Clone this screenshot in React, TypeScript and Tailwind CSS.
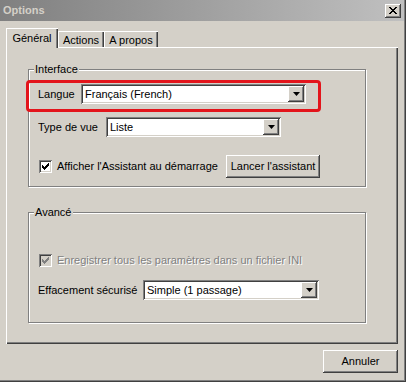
import React from "react";

const raised =
  "shadow-[inset_-1px_-1px_0_#404040,inset_1px_1px_0_#ffffff,inset_-2px_-2px_0_#808080,inset_2px_2px_0_#d4d0c8]";
const sunken =
  "shadow-[inset_1px_1px_0_#808080,inset_-1px_-1px_0_#ffffff,inset_2px_2px_0_#404040,inset_-2px_-2px_0_#d4d0c8]";
const etched = "border border-[#808080] shadow-[1px_1px_0_#ffffff,inset_1px_1px_0_#ffffff]";

function Select({ value, width }: { value: string; width: string }) {
  return (
    <div className={`flex h-[20px] items-center bg-white pl-[4px] pr-[2px] ${sunken} ${width}`}>
      <span className="flex-1 truncate">{value}</span>
      <span className={`flex h-[16px] w-[16px] items-center justify-center bg-[#d4d0c8] ${raised}`}>
        <svg width="7" height="4" viewBox="0 0 7 4">
          <path d="M0 0h7L3.5 4z" fill="#000" />
        </svg>
      </span>
    </div>
  );
}

function Check({ disabled }: { disabled?: boolean }) {
  return (
    <span
      className={`flex h-[13px] w-[13px] shrink-0 items-center justify-center ${
        disabled ? "bg-[#d4d0c8]" : "bg-white"
      } ${sunken}`}
    >
      <svg width="7" height="7" viewBox="0 0 7 7" shapeRendering="crispEdges">
        <path
          d="M0 2h1v1h1v1h1V3h1V2h1V1h1V0h1v3H6v1H5v1H4v1H3v1H2V6H1V5H0z"
          fill={disabled ? "#808080" : "#000"}
        />
      </svg>
    </span>
  );
}

function Button({ label, width }: { label: string; width: string }) {
  return (
    <div className={`flex h-[23px] items-center justify-center bg-[#d4d0c8] ${raised} ${width}`}>
      {label}
    </div>
  );
}

export default function App() {
  return (
    <div className="h-[382px] w-[408px] bg-white font-['Liberation_Sans',Arial,sans-serif] text-[11px] leading-none text-black">
      <div className="flex h-[382px] w-[406px] flex-col bg-[#d4d0c8] shadow-[inset_-1px_-1px_0_#404040,inset_-2px_-2px_0_#808080]">
        {/* title bar */}
        <div className="mr-[2px] flex h-[21px] items-center justify-between bg-gradient-to-r from-[#808080] to-[#c0c0c0] pl-[3px] pr-[3px]">
          <span className="font-bold text-[#d4d0c8]">Options</span>
          <span className={`flex h-[14px] w-[16px] items-center justify-center bg-[#d4d0c8] ${raised}`}>
            <svg width="8" height="7" viewBox="0 0 8 7" shapeRendering="crispEdges">
              <path
                d="M0 0h2v1h1v1h2V1h1V0h2v1H7v1H6v1H5v1h1v1h1v1h1v1H6V6H5V5H3v1H2v1H0V6h1V5h1V4h1V3H2V2H1V1H0z"
                fill="#000"
              />
            </svg>
          </span>
        </div>

        <div className="flex flex-col pl-[6px] pr-[8px]">
          {/* tabs */}
          <div className="mt-[8px] flex h-[18px] items-end">
            <div className="relative z-10 -mb-px flex h-[20px] w-[52px] items-start justify-center bg-[#d4d0c8] pt-[5px] shadow-[inset_1px_1px_0_#ffffff,inset_-1px_0_0_#404040,inset_-2px_0_0_#808080]">
              Général
            </div>
            <div className="flex h-[16px] w-[46px] items-start justify-center pt-[4px] shadow-[inset_1px_1px_0_#ffffff,inset_-1px_0_0_#404040,inset_-2px_0_0_#808080]">
              Actions
            </div>
            <div className="flex h-[16px] w-[54px] items-start justify-center pt-[4px] shadow-[inset_1px_1px_0_#ffffff,inset_-1px_0_0_#404040,inset_-2px_0_0_#808080]">
              A propos
            </div>
          </div>

          {/* panel */}
          <div className="flex h-[297px] flex-col pl-[22px] pt-[22px] shadow-[inset_1px_1px_0_#ffffff,inset_-1px_-1px_0_#404040,inset_-2px_-2px_0_#808080]">
            {/* Interface */}
            <div className={`relative flex h-[118px] w-[338px] flex-col ${etched}`}>
              <span className="absolute -top-[6px] left-[5px] bg-[#d4d0c8] px-px">Interface</span>
              <div className="-ml-[3px] mt-[10px] h-[32px] w-[295px] rounded-[4px] border-[3px] border-[#e3141b] pl-[9px] pt-px">
                <div className="flex h-[20px] items-center">
                  <span className="w-[43px]">Langue</span>
                  <Select value="Français (French)" width="w-[225px]" />
                </div>
              </div>
              <div className="ml-[9px] mt-[5px] flex h-[20px] items-center">
                <span className="w-[68px]">Type de vue</span>
                <Select value="Liste" width="w-[175px]" />
              </div>
              <div className="ml-[10px] mt-[18px] flex h-[23px] items-center">
                <Check />
                <span className="ml-[5px] w-[169px]">Afficher l'Assistant au démarrage</span>
                <Button label="Lancer l'assistant" width="w-[94px]" />
              </div>
            </div>

            {/* Avancé */}
            <div className={`relative mt-[25px] flex h-[111px] w-[338px] flex-col ${etched}`}>
              <span className="absolute -top-[6px] left-[5px] bg-[#d4d0c8] px-px">Avancé</span>
              <div className="ml-[10px] mt-[41px] flex h-[13px] items-center">
                <Check disabled />
                <span className="ml-[5px] text-[#808080] [text-shadow:1px_1px_0_#ffffff]">
                  Enregistrer tous les paramètres dans un fichier INI
                </span>
              </div>
              <div className="ml-[9px] mt-[13px] flex h-[20px] items-center">
                <span className="w-[105px]">Effacement sécurisé</span>
                <Select value="Simple (1 passage)" width="w-[176px]" />
              </div>
            </div>
          </div>

          <div className="mt-[6px] flex justify-end">
            <Button label="Annuler" width="w-[75px]" />
          </div>
        </div>
      </div>
    </div>
  );
}
